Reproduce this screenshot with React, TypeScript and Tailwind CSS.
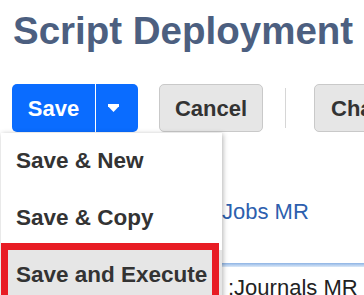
import React from "react";

const menuItems = ["Save & New", "Save & Copy", "Save and Execute"];

function Caret() {
  return (
    <svg width="11" height="8" viewBox="0 0 11 8" fill="white">
      <path d="M0 0H11V2.2L5.5 8L0 2.2Z" />
    </svg>
  );
}

export default function App() {
  return (
    <div className="relative w-[364px] h-[295px] overflow-hidden bg-white font-['Liberation_Sans',Arial,sans-serif]">
      <h1 className="pl-[13px] pt-[12px] text-[38.5px] leading-[38px] font-bold text-[#4c5f80] whitespace-nowrap">
        Script Deployment
      </h1>

      {/* toolbar */}
      <div className="mt-[34px] h-[48px] pl-[12px] flex items-center whitespace-nowrap">
        <div className="flex h-[48px] w-[126px] shrink-0 rounded-[5px] bg-[#0a6cff] text-white">
          <div className="w-[83px] flex items-center justify-center text-[22px] font-bold">Save</div>
          <div className="w-px bg-white" />
          <div className="flex-1 flex items-center pl-[12px]">
            <Caret />
          </div>
        </div>
        <div className="ml-[21px] h-[48px] w-[104px] shrink-0 flex items-center justify-center rounded-[5px] border border-[#c9c9c9] bg-[#e6e6e6] text-[22px] font-bold text-[#333]">
          Cancel
        </div>
        <div className="ml-[22px] h-[40px] w-px shrink-0 bg-[#d6d6d6]" />
        <div className="ml-[28px] h-[48px] w-[130px] shrink-0 flex items-center pl-[16px] rounded-[5px] border border-[#c9c9c9] bg-[#e6e6e6] text-[22px] font-bold text-[#333]">
          Change ID
        </div>
      </div>

      {/* page content under the menu */}
      <div className="mt-[69px] pl-[222px] text-[22px] leading-[22px] text-[#2d5fae] whitespace-nowrap">
        Jobs MR
      </div>
      <div className="mt-[40px] ml-[222px] h-[4px] bg-gradient-to-b from-[#8db3e4] to-[#dce9f8]" />
      <div className="mt-[10px] pl-[228px] text-[22px] leading-[22px] text-[#222] whitespace-nowrap">
        :Journals MR
      </div>

      {/* save dropdown */}
      <div className="absolute left-[1px] top-[133px] w-[221px] h-[200px] bg-white pt-[3px] shadow-[1px_1px_5px_rgba(0,0,0,0.3)]">
        {menuItems.map((item, i) => (
          <div
            key={item}
            className={`h-[57px] pt-[14px] pl-[15px] text-[22.5px] leading-[22px] font-bold text-[#333] whitespace-nowrap ${
              i === 2 ? "bg-[#e6e6e6]" : ""
            }`}
          >
            {item}
          </div>
        ))}
      </div>
      <div className="absolute left-[1px] top-[243px] w-[218px] h-[70px] border-[7px] border-[#e81c24]" />
    </div>
  );
}
